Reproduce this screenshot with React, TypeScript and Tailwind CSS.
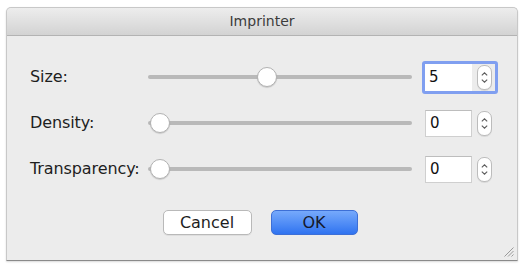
import type { ReactNode } from "react";

type Row = { label: string; value: string; pos: number; focused?: boolean };

const rows: Row[] = [
  { label: "Size:", value: "5", pos: 109, focused: true },
  { label: "Density:", value: "0", pos: 2 },
  { label: "Transparency:", value: "0", pos: 2 },
];

function Stepper() {
  return (
    <div className="flex h-[25px] w-[15px] flex-col items-center justify-center gap-[3px] rounded-[7px] border border-[#bcbcbc] bg-white shadow-[0_1px_0_rgba(0,0,0,0.08)]">
      <svg width="7" height="4" viewBox="0 0 7 4" fill="none">
        <path d="M0.8 3.4 L3.5 0.8 L6.2 3.4" stroke="#5c5c5c" strokeWidth="1.1" />
      </svg>
      <svg width="7" height="4" viewBox="0 0 7 4" fill="none">
        <path d="M0.8 0.6 L3.5 3.2 L6.2 0.6" stroke="#5c5c5c" strokeWidth="1.1" />
      </svg>
    </div>
  );
}

function Slider({ pos }: { pos: number }) {
  return (
    <div className="relative h-[22px] w-[264px]">
      <div className="absolute top-[9px] right-0 left-0 h-[4px] rounded-full bg-[#b9b9b9]" />
      <div
        className="absolute top-px h-[20px] w-[20px] rounded-full border border-[#b2b2b2] bg-white shadow-[0_1px_1px_rgba(0,0,0,0.15)]"
        style={{ left: pos }}
      />
    </div>
  );
}

function Button({ children, primary }: { children: ReactNode; primary?: boolean }) {
  return (
    <button
      className={
        primary
          ? "h-[25px] w-[87px] rounded-[5px] border border-[#3d6fd6] bg-gradient-to-b from-[#76a9fb] to-[#2f73f0] text-[16px] text-[#161a2c]"
          : "h-[25px] w-[89px] rounded-[5px] border border-[#b9b9b9] bg-white text-[16px] text-[#1d1d1d] shadow-[0_1px_0_rgba(0,0,0,0.06)]"
      }
    >
      {children}
    </button>
  );
}

export default function App() {
  return (
    <div className="h-[265px] w-[523px] bg-white pt-[7px] pl-[6px] font-['DejaVu_Sans',sans-serif]">
      <div className="relative flex h-[254px] w-[512px] flex-col rounded-t-[5px] border border-[#c8c8c8] border-b-[#8a8a8a] bg-[#ececec] shadow-[0_1px_2px_rgba(0,0,0,0.15)]">
        <div className="flex h-[28px] items-center justify-center rounded-t-[5px] border-b border-[#b3b3b3] bg-gradient-to-b from-[#ededed] to-[#d3d3d3] text-[14px] text-[#3c3c3c]">
          Imprinter
        </div>

        <div className="mt-[18px] flex flex-col pl-[23px]">
          {rows.map((r) => (
            <div key={r.label} className="flex h-[46px] items-center">
              <div className="w-[118px] text-[16px] tracking-[-0.1px] text-[#1e1e1e]">{r.label}</div>
              <Slider pos={r.pos} />
              <div
                className={
                  "ml-[10px] flex items-center gap-[5px] rounded-[3px] border-[3px] pr-[3px] " +
                  (r.focused ? "border-[#809ff0]" : "border-transparent")
                }
              >
                <div
                  className={
                    "flex h-[27px] w-[47px] items-center bg-white pl-[4px] text-[15px] text-[#111] " +
                    (r.focused ? "" : "border border-[#cfcfcf] border-t-[#bdbdbd]")
                  }
                >
                  {r.value}
                </div>
                <Stepper />
              </div>
            </div>
          ))}
        </div>

        <div className="mt-[18px] flex justify-center gap-[19px] pr-[4px]">
          <Button>Cancel</Button>
          <Button primary>OK</Button>
        </div>

        <svg className="absolute right-[3px] bottom-[3px]" width="11" height="11" viewBox="0 0 11 11">
          <path d="M10.5 1.5 L1.5 10.5 M10.5 5 L5 10.5 M10.5 8.5 L8.5 10.5" stroke="#9a9a9a" strokeWidth="1" />
        </svg>
      </div>
    </div>
  );
}
